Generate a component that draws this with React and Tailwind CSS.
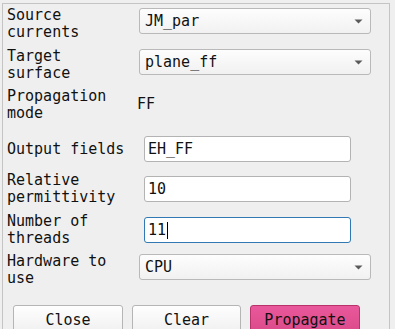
import React from "react";

const font = { fontFamily: '"DejaVu Sans Mono", monospace' };

function Arrow() {
  return (
    <svg width="9" height="5" viewBox="0 0 9 5" className="shrink-0">
      <path d="M0.5 0.5 L8.5 0.5 L4.5 4.5 Z" fill="#5a5a5a" />
    </svg>
  );
}

function Combo({ value }) {
  return (
    <div className="ml-[2px] flex h-[26px] w-[232px] items-center justify-between rounded-[3px] border border-[#b9b9b9] bg-gradient-to-b from-[#fdfdfd] to-[#f1f1f1] pl-[5px] pr-[7px] text-[#111]">
      <span>{value}</span>
      <Arrow />
    </div>
  );
}

function Input({ value, focused }) {
  return (
    <div
      className={
        "ml-[7px] flex h-[26px] w-[207px] items-center rounded-[3px] border bg-white pl-[3px] text-[#111] " +
        (focused ? "border-[#3079b5]" : "border-[#b3b3b3]")
      }
    >
      <span>{value}</span>
      {focused && <span className="ml-[1px] h-[17px] w-px bg-black" />}
    </div>
  );
}

function Row({ label, children, className, labelClass }) {
  return (
    <div className={"flex h-[34px] items-center " + (className || "")}>
      <div className={"w-[130px] leading-[17px] text-[#111] " + (labelClass || "")}>
        {label}
      </div>
      {children}
    </div>
  );
}

export default function App() {
  return (
    <div
      className="h-[329px] w-[395px] overflow-hidden bg-[#efefef] text-[15px]"
      style={font}
    >
      <div className="ml-[2px] mt-[3px] h-[340px] w-[388px] border-l border-r border-t border-[#c4c4c4] pl-[4px] pt-0">
        <Row label={<>Source<br />currents</>} labelClass="pt-[6px]">
          <Combo value="JM_par" />
        </Row>
        <Row label={<>Target<br />surface</>} className="mt-[7px]" labelClass="pt-[6px]">
          <Combo value="plane_ff" />
        </Row>
        <Row label={<>Propagation<br />mode</>} className="mt-[8px]" labelClass="pt-[2px]">
          <span className="text-[#111]">FF</span>
        </Row>
        <Row label="Output fields" className="mt-[11px]">
          <Input value="EH_FF" />
        </Row>
        <Row label={<>Relative<br />permittivity</>} className="mt-[6px]">
          <Input value="10" />
        </Row>
        <Row label={<>Number of<br />threads</>} className="mt-[7px]">
          <Input value="11" focused />
        </Row>
        <Row label={<>Hardware to<br />use</>} className="mt-[3px]" labelClass="pt-[6px]">
          <Combo value="CPU" />
        </Row>
        <div className="ml-[6px] mt-[21px] flex gap-[9px]">
          <button className="h-[28px] w-[110px] rounded-[3px] border border-[#b5b5b5] bg-gradient-to-b from-[#fefefe] to-[#f0f0f0] pt-[2px] text-[#111]">
            Close
          </button>
          <button className="h-[28px] w-[109px] rounded-[3px] border border-[#b5b5b5] bg-gradient-to-b from-[#fefefe] to-[#f0f0f0] pt-[2px] text-[#111]">
            Clear
          </button>
          <button className="h-[28px] w-[110px] rounded-[3px] border border-[#b8336c] bg-gradient-to-b from-[#e9589a] to-[#dc4a8a] pt-[2px] text-[#111]">
            Propagate
          </button>
        </div>
      </div>
    </div>
  );
}
